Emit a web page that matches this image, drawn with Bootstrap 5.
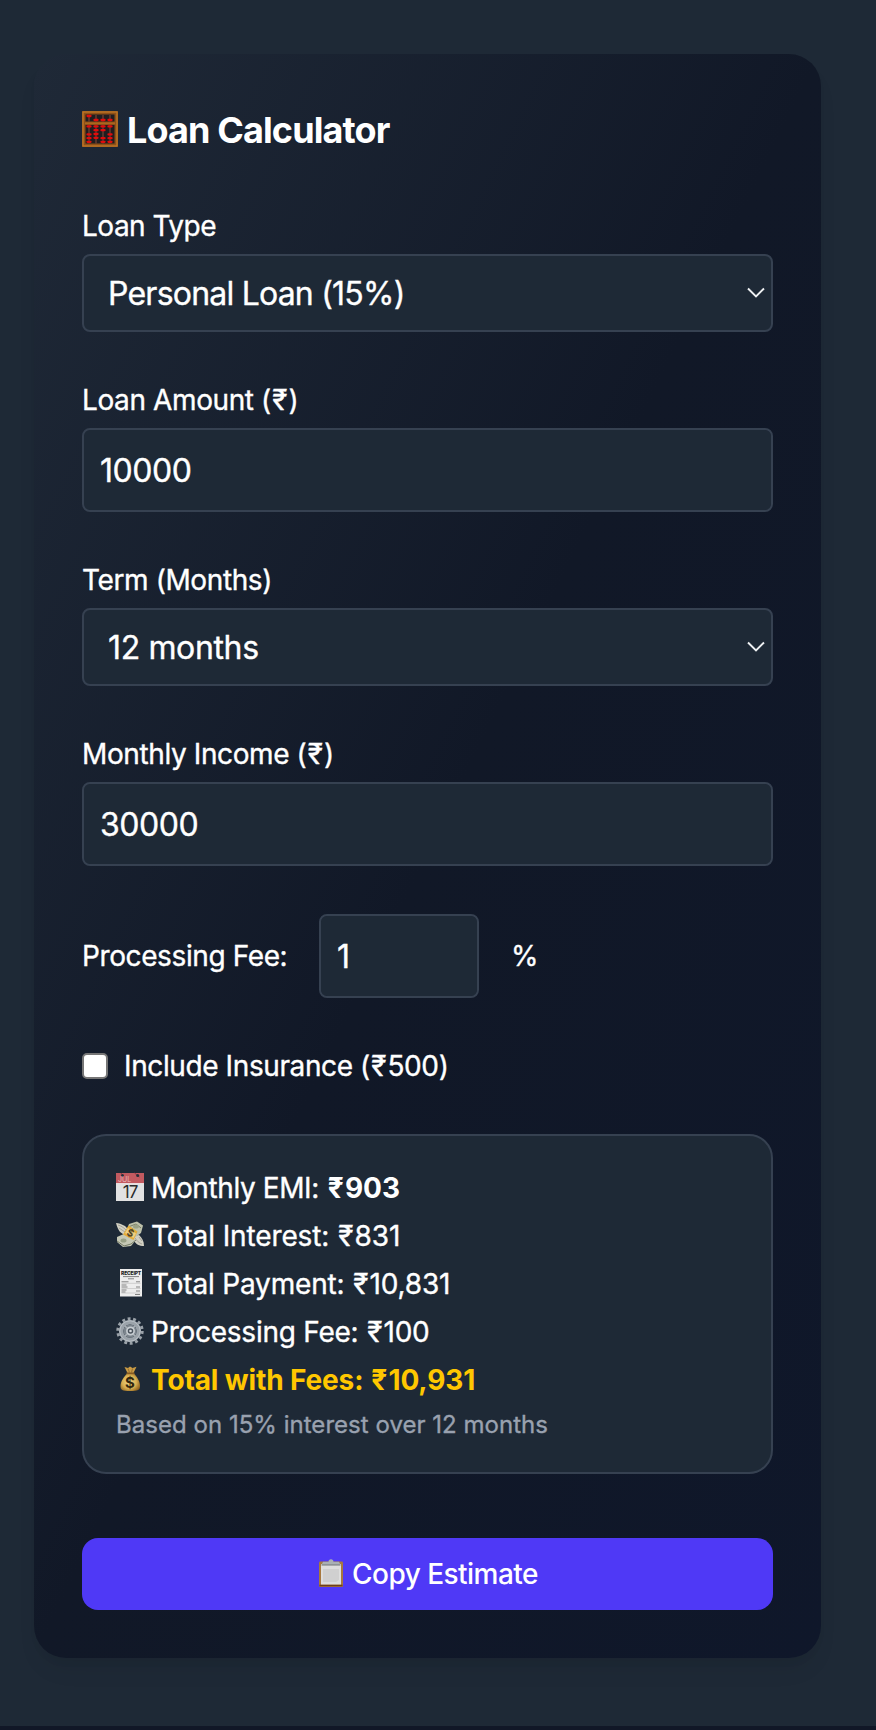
<!DOCTYPE html>
<html lang="en">
<head>
<meta charset="utf-8">
<meta name="viewport" content="width=device-width, initial-scale=1">
<title>Loan Calculator</title>
<link href="https://cdn.jsdelivr.net/npm/bootstrap@5.3.0/dist/css/bootstrap.min.css" rel="stylesheet">
<style>
  html, body { min-height: 100%; }
  body { background: #111727; color: #fff; font-family: Inter, Roboto, "Noto Sans", sans-serif; font-size: 28px; line-height: 40px; letter-spacing: -.39px; -webkit-text-stroke: .35px currentColor; }
  .page-shell { background: #1e2936; padding: 54px 55px 68px 34px; }
  .loan-panel { background: linear-gradient(to bottom right, #1f2937, #111827 50%, #0f172a); border-radius: 32px; padding: 48px; box-shadow: 0 16px 24px -6px rgba(0,0,0,.07), 0 6px 12px -5px rgba(0,0,0,.06); }
  .panel-title { font-size: 36px; font-weight: 700; line-height: 56px; letter-spacing: -.88px; margin: 0 0 48px; gap: 9px; -webkit-text-stroke: 0; }
  .panel-title svg { position: relative; top: -1px; }
  .field { margin-bottom: 48px; }
  .field .form-label { display: block; margin-bottom: 8px; font-size: 28px; line-height: 40px; }
  .label-type { letter-spacing: -.5px; }
  .form-select, .form-control, .form-select:focus, .form-control:focus { background-color: #1e2936; border: 2px solid #364151; border-radius: 8px; color: #fff; font-size: 32px; line-height: 48px; box-shadow: none; -webkit-text-stroke: .35px currentColor; }
  .form-select { height: 78px; padding: 2px 48px 0 24px; background-image: url("data:image/svg+xml,%3csvg xmlns='http://www.w3.org/2000/svg' viewBox='0 0 18 12'%3e%3cpath d='M1 1.5 9 9.5 17 1.5' fill='none' stroke='%23eef0f2' stroke-width='1.9'/%3e%3c/svg%3e"); background-size: 18px 12px; background-position: right 6px center; }
  .form-control { height: 84px; padding: 1px 16px 0; letter-spacing: -.45px; }
  .select-type { letter-spacing: -.78px; }
  .select-term { letter-spacing: -.36px; }
  .fee-row { gap: 32px; margin-bottom: 48px; }
  .fee-row .form-control { width: 160px; }
  .fee-label { width: 205px; white-space: nowrap; }
  .insurance { margin-bottom: 48px; gap: 16px; }
  .insurance .form-check-input { width: 26px; height: 26px; margin: 0; border: 2px solid #767676; border-radius: 5px; background-color: #fff; }
  .result-box { background: #1e2936; border: 2px solid #364151; border-radius: 24px; padding: 32px; margin-bottom: 64px; }
  .result-row { gap: 7px; margin-bottom: 8px; white-space: pre; }
  .row-emi strong { letter-spacing: 0; -webkit-text-stroke: 0; }
  .row-interest { letter-spacing: -.12px; }
  .row-payment { letter-spacing: -.18px; }
  .row-fee { letter-spacing: -.25px; }
  .glyph { width: 28px; height: 28px; flex: none; position: relative; top: -1px; overflow: visible; -webkit-text-stroke: 0; }
  .rupee { display: inline-block; width: 17.5px; text-align: center; }
  .fw-bold .rupee { width: 18.5px; }
  .grand { color: #ffc700; letter-spacing: -.12px; -webkit-text-stroke: 0; }
  .note { font-size: 24px; line-height: 32px; color: #99a1af; letter-spacing: .03px; padding-top: 1px; margin-bottom: -1px; }
  .btn-copy, .btn-copy:hover { background: #4f39f6; color: #fff; border: 0; border-radius: 16px; padding: 16px; font-size: 28px; line-height: 40px; letter-spacing: -.53px; font-weight: 500; gap: 7px; -webkit-text-stroke: 0; }
</style>
</head>
<body>
<main class="page-shell">
  <section class="loan-panel">
    <h1 class="panel-title d-flex align-items-center">
      <svg width="36" height="36" viewBox="0 0 36 36" class="flex-shrink-0">
        <rect width="36" height="36" rx="1" fill="#8f5017"/>
        <rect x="1" y="1" width="34" height="34" fill="none" stroke="#bb7427" stroke-width="1.4"/>
        <path d="M3.500 3.500h29v7h-29zM3.500 14h29v18.500h-29z" fill="#211d20"/>
        <path d="M3 12.200h30" stroke="#b06c22" stroke-width="1.300"/>
        <path d="M7 4v6.500M14 4v6.500M21 4v6.500M28 4v6.500M7 14v18.500M14 14v18.500M21 14v18.500M28 14v18.500" stroke="#8b4b37" stroke-width="1"/>
        <path d="M5.500 5h3M12.500 9h3M19.500 9h3M26.500 9h3M5.500 15.400h3M12.500 15.400h3M19.500 15.400h3M26.500 15.400h3M12.500 19.200h3M19.500 19.200h3M5.500 23.400h3M12.500 23h3M26.500 23.400h3M5.500 27.200h3M12.500 26.800h3M19.500 27.200h3M26.500 27.200h3M5.500 30.800h3M19.500 30.800h3M26.500 30.800h3" stroke="#e30b0b" stroke-width="2.300" stroke-linecap="round"/>
      </svg>
      <span>Loan Calculator</span>
    </h1>

    <div class="field">
      <label class="form-label label-type" for="loanType">Loan Type</label>
      <select class="form-select select-type" id="loanType"><option>Personal Loan (15%)</option></select>
    </div>
    <div class="field">
      <label class="form-label" for="amount">Loan Amount (<span class="rupee">₹</span>)</label>
      <input class="form-control" id="amount" type="text" value="10000">
    </div>
    <div class="field">
      <label class="form-label" for="term">Term (Months)</label>
      <select class="form-select select-term" id="term"><option>12 months</option></select>
    </div>
    <div class="field">
      <label class="form-label" for="income">Monthly Income (<span class="rupee">₹</span>)</label>
      <input class="form-control" id="income" type="text" value="30000">
    </div>

    <div class="fee-row d-flex align-items-center">
      <label class="fee-label" for="fee">Processing Fee:</label>
      <input class="form-control" id="fee" type="text" value="1">
      <span>%</span>
    </div>

    <div class="insurance d-flex align-items-center">
      <input class="form-check-input" type="checkbox" id="insurance">
      <label for="insurance">Include Insurance (<span class="rupee">₹</span>500)</label>
    </div>

    <div class="result-box">
      <div class="result-row row-emi d-flex align-items-center">
        <svg class="glyph" viewBox="0 0 28 28">
          <path d="M0 0h28v28H0z" fill="#e2e2e2"/>
          <path d="M0 0h28v10.500H0z" fill="#c25a60"/>
          <path d="M0 10.500h28" stroke="#f0eeee" stroke-width=".8"/>
          <path d="m18.500 0 5 4M5 0l2 3" stroke="#8a3940" stroke-width="1"/>
          <circle cx="6.500" cy="2.600" r="1.500" fill="#252f3b"/><circle cx="21.700" cy="2.600" r="1.500" fill="#252f3b"/>
          <text x="2" y="9.300" font-size="7" letter-spacing="0" fill="#eab9ba">JUL</text>
          <text x="14" y="25" text-anchor="middle" font-size="17" letter-spacing="-1" fill="#2b2b2b">17</text>
        </svg>
        <span>Monthly EMI: <strong class="fw-bold"><span class="rupee">₹</span>903</strong></span>
      </div>
      <div class="result-row row-interest d-flex align-items-center">
        <svg class="glyph" viewBox="0 0 28 28">
          <path d="M0 2c3 0 5 1 9 3l5 5-4 4C5 13 2 10 0 2zM28 25c-5 0-8-2-10-5l-1-5 6-1c3 3 5 6 5 11z" fill="#d2d0c3"/>
          <path d="M2 4c3 1 5 2 8 5M3 7l6 4M26 23c-3-1-5-3-7-6m4-1 3 4" stroke="#99988d" stroke-width=".8" fill="none"/>
          <path d="M13 3 21 .5l6 4-2 7.500-7 5-8-6z" fill="#bdc1aa"/>
          <path d="m1 16 9-4 10 7-5 6-8 1-6-5z" fill="#c6c9b6"/>
          <path d="m1 20 7 5 7-2 5-4M12 6l8-3 5 4" stroke="#777d68" fill="none"/>
          <ellipse cx="20" cy="5.500" rx="3" ry="2" fill="#99a186"/><ellipse cx="7.500" cy="19.500" rx="3" ry="2" fill="#99a186"/>
          <path d="m12.500 4.500 9 6-4 8.500-10.500-5.500z" fill="#e4ad3a"/>
          <path d="m12 7 8 5.500-2.500 4.500-8.500-5z" fill="#edcf83"/>
          <text x="14.300" y="15.300" text-anchor="middle" font-size="10" font-weight="700" fill="#4e401f" transform="rotate(25 14 12)">$</text>
        </svg>
        <span>Total Interest: <span class="rupee">₹</span>831</span>
      </div>
      <div class="result-row row-payment d-flex align-items-center">
        <svg class="glyph" viewBox="0 0 28 28">
          <path d="M4 0h22v27.500H4z" fill="#ededed"/>
          <text x="15" y="6.400" text-anchor="middle" font-size="5" font-weight="800" letter-spacing="-.2" fill="#222">RECEIPT</text>
          <path d="M7 7.600h16" stroke="#555" stroke-width=".7"/><path d="M12 9.800h6" stroke="#888" stroke-width="1"/>
          <path d="M5.500 12.800h7M20 12.800h4M5.500 16h5M5.500 18h6M20 18h4M5.500 21h5M5.500 23h4M20 22h4M19 25.500h5" stroke="#777" stroke-width=".9"/>
          <path d="M5.500 14.300h19M5.500 19.500h19M5.500 24h19" stroke="#bbb" stroke-width=".6"/>
        </svg>
        <span>Total Payment: <span class="rupee">₹</span>10,831</span>
      </div>
      <div class="result-row row-fee d-flex align-items-center">
        <svg class="glyph" viewBox="0 0 28 28">
          <circle cx="14" cy="14" r="12.200" fill="none" stroke="#9aa1a8" stroke-width="3" stroke-dasharray="2.900 2.576"/>
          <circle cx="14" cy="14" r="8.800" fill="none" stroke="#9ba3aa" stroke-width="4.400"/>
          <circle cx="14" cy="14" r="6.600" fill="#7b848c"/>
          <circle cx="14" cy="14" r="10.200" fill="none" stroke="#bcc3c8" stroke-width=".9"/>
          <path d="m9 9 3 3m7-3-3 3M9 19l3-3m7 3-3-3" stroke="#aab1b7" stroke-width="1.400"/>
          <circle cx="14.500" cy="14" r="3.600" fill="#4a535d" stroke="#c6ccd1" stroke-width="1.700"/>
          <circle cx="14.500" cy="14" r="1.300" fill="#d4d8dc"/>
        </svg>
        <span>Processing Fee: <span class="rupee">₹</span>100</span>
      </div>
      <div class="result-row grand fw-bold d-flex align-items-center">
        <svg class="glyph" viewBox="0 0 28 28">
          <defs><radialGradient id="sack" cx=".45" cy=".5" r=".6"><stop offset="0" stop-color="#f3d886"/><stop offset=".6" stop-color="#d9b052"/><stop offset="1" stop-color="#93661f"/></radialGradient></defs>
          <path d="M8.500 2 12 3l2-1.500L16.500 3 20.500 1.800 17.500 8h-6z" fill="#c99b45"/>
          <path d="M11.500 8h6c3.500 4 6.500 8 6.500 13 0 4-2 5-10 5S4.500 25 4.500 21c0-5 3.500-9 7-13z" fill="url(#sack)"/>
          <path d="M10.500 8.300h8" stroke="#855a22" stroke-width="1.700"/>
          <path d="m12 3.500 1.500 4m3-4L15.500 7.500" stroke="#8a642b" stroke-width=".8"/>
          <text x="14" y="23" text-anchor="middle" font-size="15" font-weight="700" letter-spacing="0" fill="#33270f">$</text>
        </svg>
        <span>Total with Fees: <span class="rupee">₹</span>10,931</span>
      </div>
      <div class="note">Based on 15% interest over 12 months</div>
    </div>

    <button type="button" class="btn btn-copy w-100 d-flex align-items-center justify-content-center">
      <svg class="glyph" viewBox="0 0 28 28">
        <rect x="2" y="2.500" width="24" height="25.500" rx="1.300" fill="#a7783f"/>
        <path d="M2.500 26.500h23" stroke="#6e3f1c" stroke-width="1.600"/>
        <path d="M4 5h20v20.500H4z" fill="#dedede"/>
        <path d="M6 10h16v11l-3 2H6z" fill="#d0d0d0"/>
        <path d="M6 2.800h5.500C11.500 1 12.500.2 14 .2s2.500.8 2.500 2.600H22L23.500 6h-19z" fill="#a9b0b4"/>
        <path d="M4.500 6h19" stroke="#737779" stroke-width="1"/>
      </svg>
      <span>Copy Estimate</span>
    </button>
  </section>
</main>
<script src="https://cdn.jsdelivr.net/npm/bootstrap@5.3.0/dist/js/bootstrap.bundle.min.js"></script>
</body>
</html>
